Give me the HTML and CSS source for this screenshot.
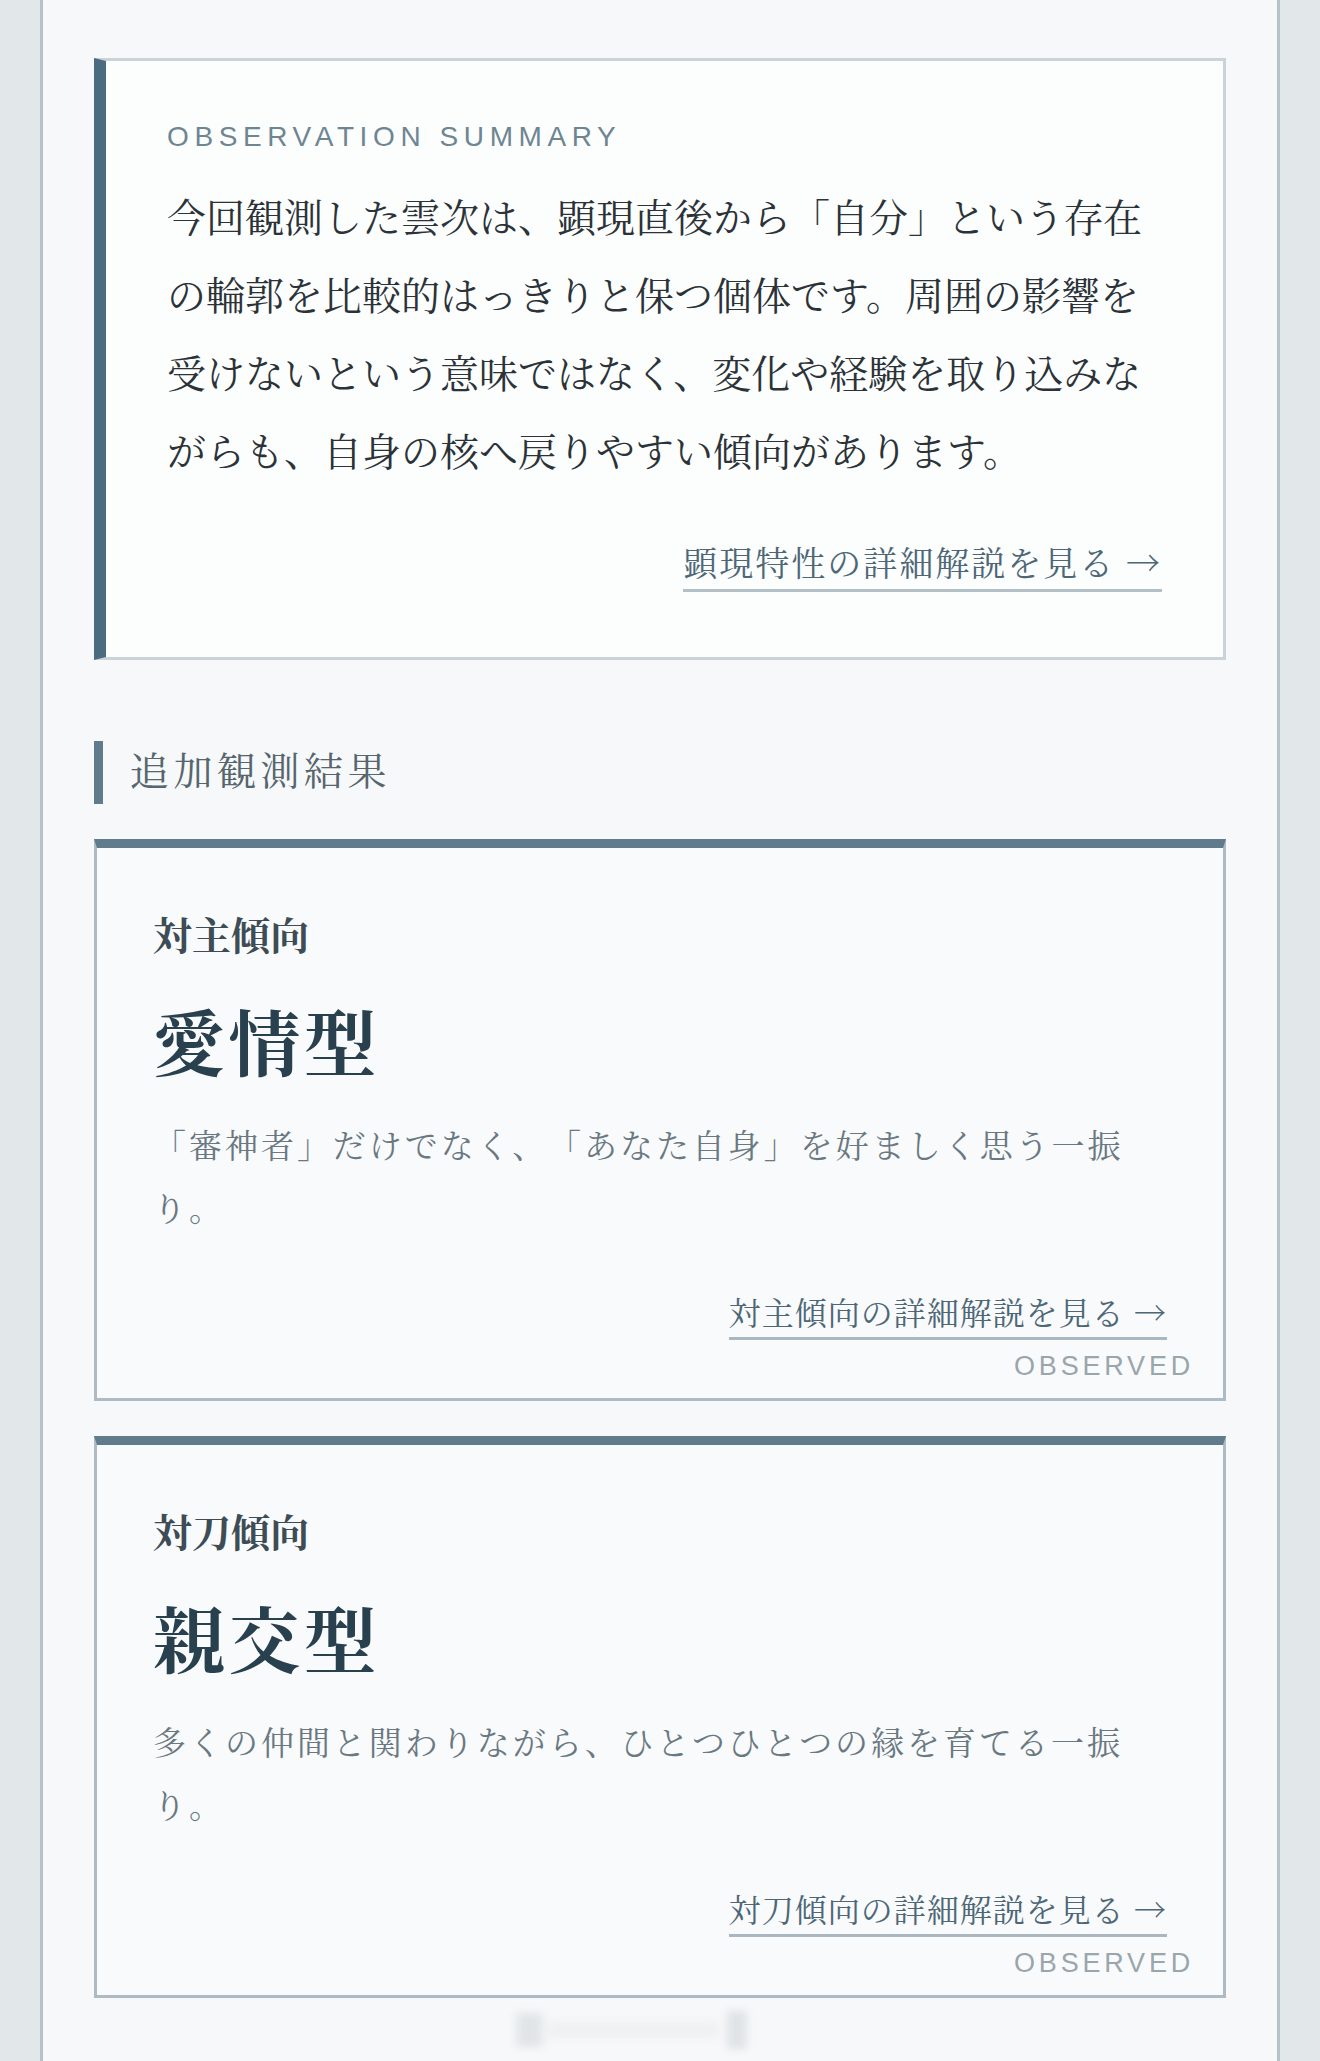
FILE: index.html
```html
<!DOCTYPE html>
<html lang="ja">
<head>
<meta charset="utf-8">
<title>観測結果</title>
<link rel="stylesheet" href="styles.css">
</head>
<body>
<div class="page">
  <section class="summary">
    <p class="summary-label">OBSERVATION SUMMARY</p>
    <p class="summary-text">今回観測した雲次は、顕現直後から「自分」という存在の輪郭を比較的はっきりと保つ個体です。周囲の影響を受けないという意味ではなく、変化や経験を取り込みながらも、自身の核へ戻りやすい傾向があります。</p>
    <div class="link-row"><a class="detail-link summary-link" href="#">顕現特性の詳細解説を見る →</a></div>
  </section>

  <h2 class="section-title">追加観測結果</h2>

  <div class="cards">
    <article class="card">
      <p class="card-label">対主傾向</p>
      <h3 class="card-title">愛情型</h3>
      <p class="card-desc">「審神者」だけでなく、「あなた自身」を好ましく思う一振り。</p>
      <div class="link-row"><a class="detail-link card-link" href="#">対主傾向の詳細解説を見る →</a></div>
      <span class="observed">OBSERVED</span>
    </article>

    <article class="card">
      <p class="card-label">対刀傾向</p>
      <h3 class="card-title">親交型</h3>
      <p class="card-desc">多くの仲間と関わりながら、ひとつひとつの縁を育てる一振り。</p>
      <div class="link-row"><a class="detail-link card-link" href="#">対刀傾向の詳細解説を見る →</a></div>
      <span class="observed">OBSERVED</span>
    </article>
  </div>

  <div class="blur-mark" aria-hidden="true">
    <span class="bm-left"></span>
    <span class="bm-band"></span>
    <span class="bm-right"></span>
  </div>
</div>
</body>
</html>
```

FILE: styles.css
```css
html, body {
  margin: 0;
  padding: 0;
}

body {
  background: #e2e7ea;
  font-family: "Noto Serif CJK JP", "Source Han Serif JP", "IPAexMincho", "IPAMincho", "Noto Sans CJK JP", serif;
  color: #2e363b;
  text-spacing-trim: space-all;
}

.page {
  width: 1132px;
  margin: 0 auto;
  min-height: 2061px;
  padding: 58px 51px 0;
  background: #f6f8f9;
  border-left: 3px solid #b7c2c9;
  border-right: 3px solid #b7c2c9;
  box-sizing: content-box;
}

p, h2, h3 {
  margin: 0;
}

/* Summary */
.summary {
  background: #fcfdfd;
  border: 3px solid #cad3d8;
  border-left: 12px solid #4a6b80;
  padding: 55px 61px 65px 61px;
}

.summary-label {
  font-family: "Liberation Sans", Arial, sans-serif;
  font-size: 28px;
  line-height: 42px;
  letter-spacing: 5.6px;
  color: #6e8592;
  margin-bottom: 18px;
}

.summary-text {
  font-size: 39px;
  line-height: 78px;
  color: #2b3338;
}

.link-row {
  display: flex;
  justify-content: flex-end;
}

.detail-link {
  display: inline-block;
  text-decoration: none;
  color: #4d6777;
  border-bottom: 3px solid #b3c0c8;
  padding-bottom: 3px;
}

.summary-link {
  margin-top: 50px;
  font-size: 34px;
  line-height: 48px;
  letter-spacing: 2px;
}

/* Section title */
.section-title {
  margin-top: 81px;
  border-left: 9px solid #5f7b8c;
  padding-left: 27px;
  padding-bottom: 8px;
  font-size: 39px;
  line-height: 55px;
  letter-spacing: 4.5px;
  font-weight: 400;
  color: #56666f;
}

/* Cards */
.cards {
  margin-top: 35px;
  display: flex;
  flex-direction: column;
  gap: 35px;
}

.card {
  position: relative;
  background: #f8fafb;
  border: 3px solid #aebbc4;
  border-top: 9px solid #5f7b8c;
  padding: 56px 56px 58px 56px;
}

.card-label {
  font-size: 39px;
  line-height: 58px;
  font-weight: 700;
  color: #3d4c55;
}

.card-title {
  margin-top: 30px;
  font-size: 72px;
  line-height: 94px;
  font-weight: 700;
  letter-spacing: 3.6px;
  color: #29404e;
}

.card-desc {
  margin-top: 26px;
  font-size: 33px;
  line-height: 63px;
  letter-spacing: 2.97px;
  color: #6a7881;
}

.card-link {
  margin-top: 50px;
  font-size: 32px;
  line-height: 46px;
  letter-spacing: 1px;
  border-bottom-color: #aab7c0;
}

.observed {
  position: absolute;
  right: 29px;
  bottom: 19px;
  font-family: "Liberation Sans", Arial, sans-serif;
  font-size: 27px;
  line-height: 26px;
  letter-spacing: 3.8px;
  color: #9aa5ac;
}

/* blurred mark below cards */
.blur-mark {
  display: flex;
  align-items: center;
  margin-top: 10px;
  margin-left: 421px;
  height: 44px;
  width: 232px;
  filter: blur(4px);
  opacity: 0.7;
}

.bm-left {
  width: 30px;
  height: 34px;
  background: linear-gradient(90deg, #dfe3e6 0 30%, #cdd2d6 30% 45%, #e2e5e8 45% 60%, #cdd2d6 60% 75%, #e3e6e9 75%);
}

.bm-band {
  flex: 1;
  height: 16px;
  margin: 0 8px 0 4px;
  background: #ebedef;
}

.bm-right {
  width: 20px;
  height: 38px;
  background: #d6dbde;
}
```
